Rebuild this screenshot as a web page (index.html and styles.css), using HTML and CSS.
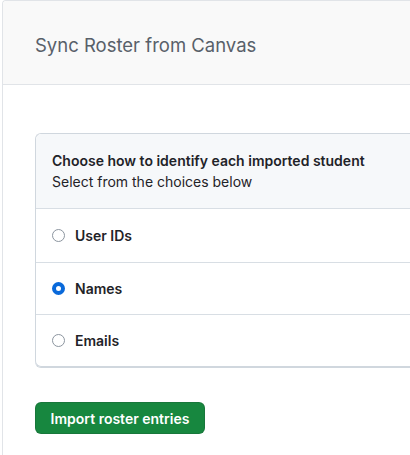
FILE: index.html
```html
<!DOCTYPE html>
<html>
<head>
<meta charset="utf-8">
<link rel="stylesheet" href="styles.css">
</head>
<body>
<div class="page">
  <div class="panel">
    <div class="panel-head">
      <h2 class="title">Sync Roster from Canvas</h2>
    </div>
    <div class="panel-body">
      <div class="box">
        <div class="box-head">
          <div class="box-title">Choose how to identify each imported student</div>
          <div class="box-sub">Select from the choices below</div>
        </div>
        <label class="row"><span class="radio"></span><span class="label">User IDs</span></label>
        <label class="row"><span class="radio checked"></span><span class="label">Names</span></label>
        <label class="row"><span class="radio"></span><span class="label">Emails</span></label>
      </div>
      <button class="btn">Import roster entries</button>
    </div>
  </div>
</div>
</body>
</html>
```

FILE: styles.css
```css
html, body {
  margin: 0;
  padding: 0;
  overflow: hidden;
  background: #fff;
}
body {
  font-family: Inter, "Liberation Sans", Arial, sans-serif;
  color: #24292f;
  font-size: 14px;
  line-height: 21px;
}
.page {
  padding-left: 2px;
  height: 100vh;
  box-sizing: border-box;
}
.panel {
  height: 100%;
  box-sizing: border-box;
  border: 1px solid #e1e4e8;
  border-right: none;
  border-bottom: none;
  border-radius: 4px 0 0 0;
}
.panel-head {
  height: 83px;
  background: #f9f9f9;
  border-bottom: 1px solid #e1e4e8;
  display: flex;
  align-items: center;
  padding: 0 32px;
  border-radius: 4px 0 0 0;
}
.title {
  margin: 0;
  font-size: 18.5px;
  font-weight: 400;
  color: #586069;
  line-height: 24px;
  padding-top: 5px;
}
.panel-body {
  padding: 48px 0 0 32px;
}
.box {
  border: 1px solid #d0d7de;
  border-right: none;
  border-radius: 6px 0 0 6px;
  box-shadow: 0 1px 0 #d0d7de;
}
.box-head {
  background: #f6f8fa;
  padding: 16px;
  border-bottom: 1px solid #d8dee4;
  border-radius: 6px 0 0 0;
}
.box-title {
  font-weight: 600;
  color: #1f2328;
}
.box-sub {
  color: #1f2328;
}
.row {
  display: flex;
  align-items: center;
  height: 52px;
  padding: 0 16px;
  border-top: 1px solid #d8dee4;
  box-sizing: border-box;
}
.box-head + .row {
  border-top: none;
  height: 53px;
}
.radio {
  width: 13px;
  height: 13px;
  box-sizing: border-box;
  border: 1px solid #8c959f;
  border-radius: 50%;
  margin-right: 10px;
  flex: none;
  background: #fff;
}
.radio.checked {
  border: 4px solid #0969da;
}
.label {
  font-weight: 600;
  color: #1f2328;
}
.btn {
  display: block;
  margin-top: 35px;
  width: 170px;
  height: 32px;
  background: #17873f;
  color: #fff;
  border: 1px solid rgba(31, 35, 40, 0.15);
  border-radius: 6px;
  font-family: inherit;
  font-size: 14px;
  font-weight: 600;
  padding: 0;
}
```
